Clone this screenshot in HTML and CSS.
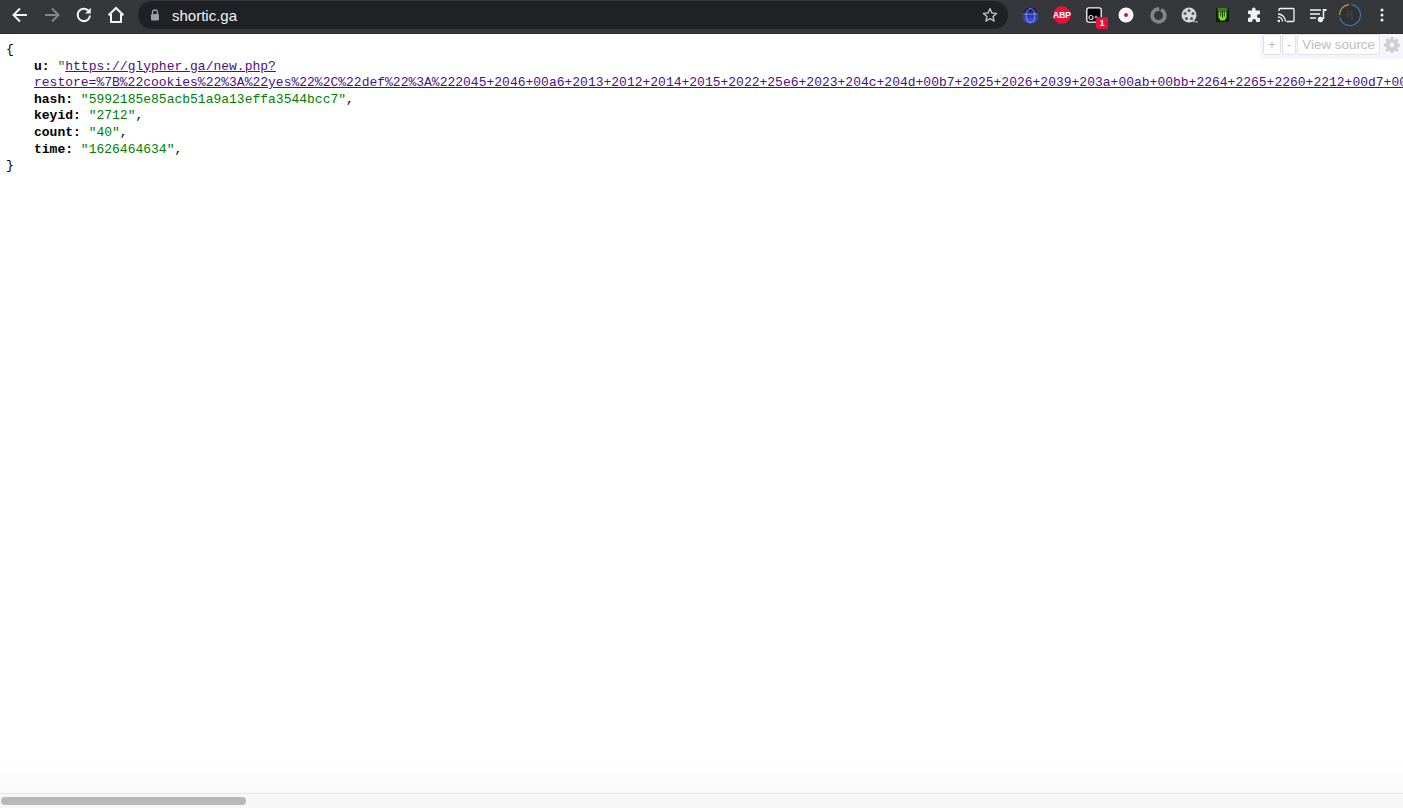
FILE: index.html
```html
<!DOCTYPE html>
<html lang="en">
<head>
<meta charset="utf-8">
<title>shortic.ga</title>
<link rel="stylesheet" href="styles.css">
</head>
<body>
<div class="window">
  <header class="toolbar">
    <div class="nav">
      <span class="btn"><svg width="18" height="18" viewBox="0 0 18 18"><path d="M16 9H3M9 2.500 2.500 9 9 15.500" class="ln"/></svg></span>
      <span class="btn"><svg width="18" height="18" viewBox="0 0 18 18"><path d="M2 9h13M9 2.500 15.500 9 9 15.500" class="ln dim"/></svg></span>
      <span class="btn"><svg width="18" height="18" viewBox="0 0 18 18"><path d="M15 9.500A6.200 6.200 0 1 1 13.200 4.500" class="ln"/><path d="M15.800 1.800v5.700h-5.700z" class="fl"/></svg></span>
      <span class="btn"><svg width="18" height="18" viewBox="0 0 18 18"><path d="M1.500 9.200 9 2l7.500 7.200M4 8v8h10V8" class="ln"/></svg></span>
    </div>
    <div class="omnibox">
      <svg class="lock" width="10" height="12" viewBox="0 0 10 12"><path d="M2.500 5V3.500a2.500 2.500 0 0 1 5 0V5" fill="none" stroke="#9aa0a6" stroke-width="1.300"/><rect x="1" y="5" width="8" height="6.500" rx="1" fill="#9aa0a6"/></svg>
      <span class="host">shortic.ga</span>
      <svg class="star" width="16" height="16" viewBox="0 0 16 16"><path d="M8 1.600 9.900 6l4.700.4-3.600 3.100 1.100 4.600L8 11.700l-4.100 2.400L5 9.500 1.400 6.400 6.100 6z" fill="none" stroke="#b9bcbf" stroke-width="1.400" stroke-linejoin="round"/></svg>
    </div>
    <div class="exts">
      <span class="ext"><svg width="17" height="17" viewBox="0 0 18 18"><defs><linearGradient id="g1" x1="0" y1="0" x2="0" y2="1"><stop offset="0" stop-color="#12124f"/><stop offset="1" stop-color="#3f62f5"/></linearGradient></defs><circle cx="9" cy="9" r="8.500" fill="url(#g1)"/><ellipse cx="9" cy="9" rx="4.500" ry="7.500" fill="none" stroke="#8d96d8" stroke-width="1"/><path d="M1.500 7.500h15" stroke="#8d96d8" stroke-width="1"/></svg></span>
      <span class="ext"><svg width="18" height="18" viewBox="0 0 18 18"><path d="M5.500 .5h7L17.500 5.500v7L12.500 17.500h-7L.5 12.500v-7z" fill="#e8103c"/><text x="9" y="12" class="abp">ABP</text></svg></span>
      <span class="ext"><svg width="16" height="16" viewBox="0 0 16 16"><rect x=".8" y=".8" width="14.400" height="14.400" rx="2" fill="#000" stroke="#fff" stroke-width="1.300"/><circle cx="5" cy="10.500" r="2" fill="none" stroke="#ddd" stroke-width="1.200"/><circle cx="10" cy="10" r="1.500" fill="#999"/></svg><span class="badge">1</span></span>
      <span class="ext"><svg width="16" height="16" viewBox="0 0 16 16"><circle cx="8" cy="8" r="7.500" fill="#fff"/><circle cx="8" cy="8" r="2" fill="#e0101e"/></svg></span>
      <span class="ext"><svg width="17" height="17" viewBox="0 0 16 16"><circle cx="8" cy="8" r="6" fill="none" stroke="#85868a" stroke-width="3.500"/><path d="M8.500 0h3.500L9 4.500z" fill="#36373b"/></svg></span>
      <span class="ext"><svg width="18" height="18" viewBox="0 0 18 18"><path d="M12 14l5 1.500v1.500l-6-1z" fill="#8f8f8f"/><circle cx="8" cy="9" r="7.500" fill="#d8d8d8"/><g fill="#55565a"><circle cx="8" cy="4.500" r="1.500"/><circle cx="4" cy="7.500" r="1.500"/><circle cx="12" cy="7.500" r="1.500"/><circle cx="5.500" cy="12.500" r="1.500"/><circle cx="10.500" cy="12.500" r="1.500"/></g></svg></span>
      <span class="ext"><svg width="13" height="14" viewBox="0 0 13 14"><rect width="13" height="14" fill="#0a1f06"/><path d="M1.500 0h10v3h-10z" fill="#3f7a2a"/><path d="M2.500 3.500h8v6l-2 3h-4l-2-3z" fill="#7ee60f"/><path d="M4.700 3v5.500M6.500 3v7M8.300 3v5.500" stroke="#123008" stroke-width=".9"/></svg></span>
      <span class="ext"><svg width="16" height="16" viewBox="0 0 16 16"><path d="M6 2.200a1.800 1.800 0 0 1 3.600 0V3.500H13a1 1 0 0 1 1 1V7.200h-1.200a1.900 1.900 0 0 0 0 3.800H14v3a1 1 0 0 1-1 1H10v-1.200a1.900 1.900 0 0 0-3.800 0V15H3a1 1 0 0 1-1-1v-3.300h1a1.800 1.800 0 0 0 0-3.600H2V4.500a1 1 0 0 1 1-1h3z" fill="#f1f3f4"/></svg></span>
      <span class="ext"><svg width="18" height="16" viewBox="0 0 18 16"><path d="M2 4V2.600A1.100 1.100 0 0 1 3.100 1.500h12.800A1.100 1.100 0 0 1 17 2.600v10.800a1.100 1.100 0 0 1-1.100 1.100H9.500" fill="none" stroke="#f1f3f4" stroke-width="1.300"/><path d="M1 7a7.500 7.500 0 0 1 7.500 7.500M1 10a4.500 4.500 0 0 1 4.500 4.500" fill="none" stroke="#f1f3f4" stroke-width="1.300"/><circle cx="1.800" cy="14" r="1.300" fill="#f1f3f4"/></svg></span>
      <span class="ext"><svg width="18" height="16" viewBox="0 0 18 16"><path d="M1 3h11M1 7h10M1 11h6" stroke="#f1f3f4" stroke-width="1.500"/><path d="M14.500 2v10" stroke="#f1f3f4" stroke-width="1.500"/><path d="M14 2h3.500v2H14z" fill="#f1f3f4"/><circle cx="11.500" cy="12.500" r="2.700" fill="#f1f3f4"/></svg></span>
      <span class="ext"><svg width="24" height="24" viewBox="0 0 24 24"><circle cx="12" cy="12" r="10.500" fill="#303135"/><path d="M11 1.600A10.500 10.500 0 0 0 1.500 12" fill="none" stroke="#c9a227" stroke-width="1.100"/><path d="M1.800 14.500A10.500 10.500 0 0 0 22.500 12 10.500 10.500 0 0 0 13.500 1.600" fill="none" stroke="#3f7fc4" stroke-width="1.100"/><path d="M10 8v6M14 8v9M10 11h4" fill="none" stroke="#46474c" stroke-width="1.200"/></svg></span>
      <span class="ext"><svg width="4" height="14" viewBox="0 0 4 14"><circle cx="2" cy="2" r="1.500" fill="#f1f3f4"/><circle cx="2" cy="7" r="1.500" fill="#f1f3f4"/><circle cx="2" cy="12" r="1.500" fill="#f1f3f4"/></svg></span>
    </div>
  </header>
  <main class="page">
    <div class="json">
      <div>{</div>
      <div class="entry"><b>u:</b> <span class="str">"</span><a href="#" class="link">https://glypher.ga/new.php?<br>restore=%7B%22cookies%22%3A%22yes%22%2C%22def%22%3A%222045+2046+00a6+2013+2012+2014+2015+2022+25e6+2023+204c+204d+00b7+2025+2026+2039+203a+00ab+00bb+2264+2265+2260+2212+00d7+00f7+00b1</a></div>
      <div class="entry"><b>hash:</b> <span class="str">"5992185e85acb51a9a13effa3544bcc7"</span>,</div>
      <div class="entry"><b>keyid:</b> <span class="str">"2712"</span>,</div>
      <div class="entry"><b>count:</b> <span class="str">"40"</span>,</div>
      <div class="entry"><b>time:</b> <span class="str">"1626464634"</span>,</div>
      <div>}</div>
    </div>
    <div class="viewer">
      <span class="vbtn">+</span>
      <span class="vbtn">-</span>
      <span class="vbtn">View source</span>
      <svg class="gear" width="16" height="16" viewBox="0 0 16 16"><path d="M6.700 0h2.600l.4 2.200 1.300.6 1.900-1.300 1.800 1.800-1.300 1.900.6 1.300 2.200.4v2.600l-2.200.4-.6 1.300 1.300 1.900-1.800 1.800-1.900-1.300-1.300.6-.4 2.200H6.700l-.4-2.200-1.300-.6-1.900 1.300-1.800-1.800 1.300-1.900-.6-1.300L-.2 9.300V6.700L2 6.300l.6-1.300-1.300-1.900 1.800-1.800L5 2.600l1.300-.6z" fill="#cfcfcf"/><circle cx="8" cy="8" r="2.400" fill="#f6f5fd"/></svg>
    </div>
  </main>
  <div class="scrollbar"><div class="thumb"></div></div>
</div>
</body>
</html>
```
FILE: styles.css
```css
* { box-sizing: border-box; }
html, body { margin: 0; height: 100%; overflow: hidden; background: #fff; }
.window { display: flex; flex-direction: column; height: 100vh; }

.toolbar { flex: 0 0 34px; display: flex; align-items: flex-start; background: #36373b; border-bottom: 1px solid #2a2b2e; }
.nav { display: flex; padding-left: 4px; }
.btn { width: 32px; height: 30px; display: flex; align-items: center; justify-content: center; }
.ln { fill: none; stroke: #f1f3f4; stroke-width: 2; }
.dim { stroke: #85878a; }
.fl { fill: #f1f3f4; }

.omnibox { flex: 0 0 870px; margin: 1px 0 0 6px; height: 28px; border-radius: 14px; background: #202124; display: flex; align-items: center; padding: 0 10px 0 12px; }
.lock { flex: none; }
.host { margin-left: 12px; flex: 1; font: 15px "Liberation Sans", Arial, sans-serif; color: #f1f3f4; }
.star { flex: none; }

.exts { display: flex; margin-left: 6px; }
.ext { position: relative; width: 32px; height: 30px; display: flex; align-items: center; justify-content: center; }
.abp { font: bold 8.500px "Liberation Sans", Arial, sans-serif; fill: #fff; text-anchor: middle; }
.badge { position: absolute; left: 18px; top: 17px; width: 12px; height: 12px; border-radius: 2px; background: #e8103c; color: #fff; font: bold 9px/12px "Liberation Sans", Arial, sans-serif; text-align: center; }

.page { position: relative; flex: 1; min-height: 0; overflow: hidden; background: linear-gradient(#fff 96%, #f9f9f9); }
.json { padding: 8px 0 0 6px; font: 13px/16.600px "Liberation Mono", "Courier New", monospace; color: #000; white-space: nowrap; }
.entry { padding-left: 28px; }
.entry b { font-weight: bold; }
.str { color: #008000; }
.link { color: #4b0f87; }

.viewer { position: absolute; top: 0; right: 0; width: 143px; height: 25px; display: flex; align-items: flex-start; gap: 1px; padding-left: 3px; background: #f6f5fd; border-bottom-left-radius: 4px; }
.vbtn { flex: none; height: 21px; padding: 0 4px; border: 1px solid #e2e2e2; border-radius: 3px; background: #fff; color: #bdbdbd; font: 13.400px/19px "Liberation Sans", Arial, sans-serif; white-space: nowrap; }
.gear { margin: 3px 0 0 3px; flex: none; }

.scrollbar { flex: 0 0 15px; background: #f7f7f7; border-top: 1px solid #e6e6e6; padding: 3px 1px; }
.thumb { width: 245px; height: 8px; border-radius: 4px; background: #b8b8b8; }
```
